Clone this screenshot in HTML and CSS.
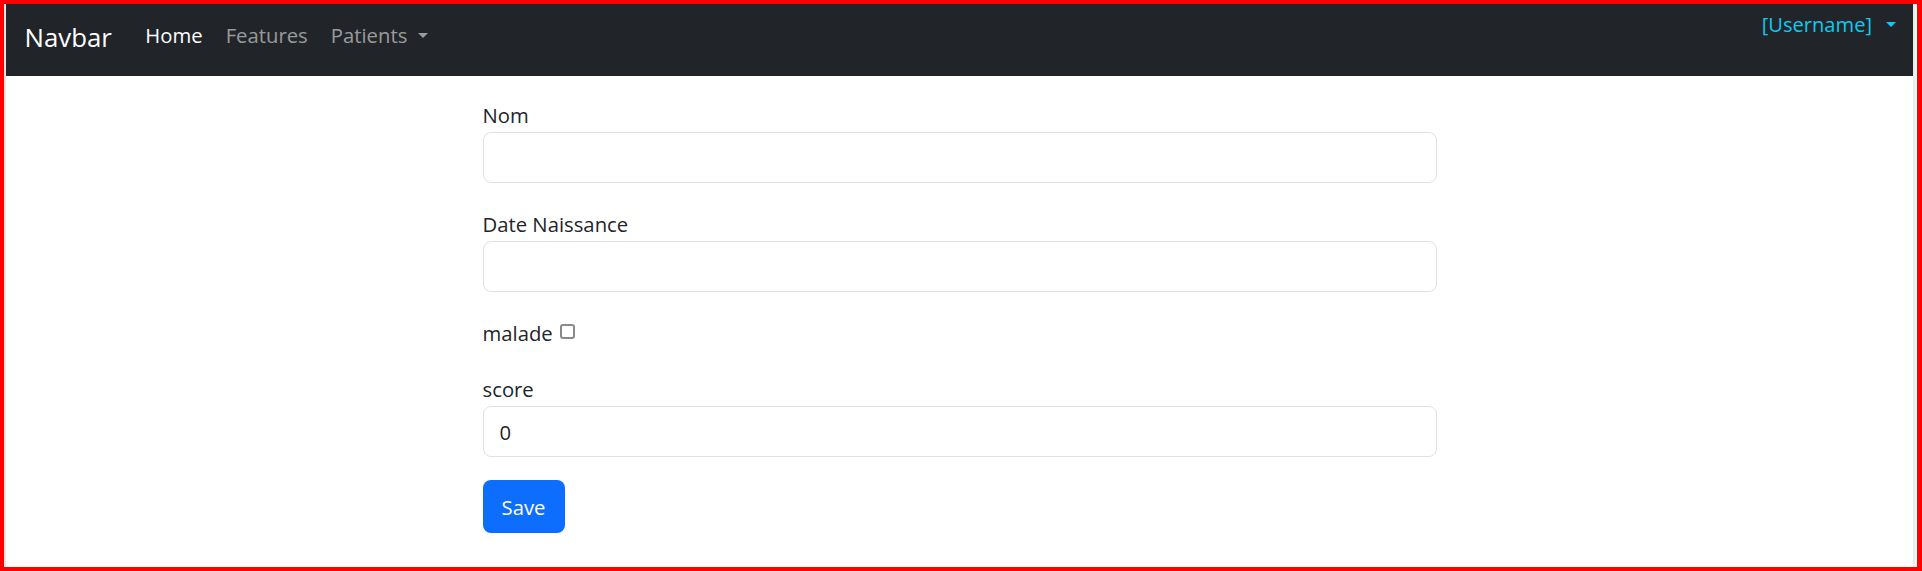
FILE: index.html
```html
<!DOCTYPE html>
<html lang="fr">
<head>
<meta charset="utf-8">
<title>Patient</title>
<link rel="stylesheet" href="styles.css">
</head>
<body>
<div class="frame">
  <div class="page">
    <nav class="navbar">
      <a class="brand" href="#">Navbar</a>
      <ul class="nav">
        <li class="nav-item"><a class="nav-link active" href="#">Home</a></li>
        <li class="nav-item"><a class="nav-link" href="#">Features</a></li>
        <li class="nav-item"><a class="nav-link" href="#">Patients<span class="caret"></span></a></li>
      </ul>
      <a class="user" href="#">[Username]<span class="caret user-caret"></span></a>
    </nav>
    <main class="content">
      <form class="form">
        <div class="field">
          <label class="label" for="nom">Nom</label>
          <input class="input" id="nom" type="text">
        </div>
        <div class="field">
          <label class="label" for="dn">Date Naissance</label>
          <input class="input" id="dn" type="text">
        </div>
        <div class="field check-row">
          <label class="label inline" for="malade">malade</label><input class="check" id="malade" type="checkbox">
        </div>
        <div class="field">
          <label class="label" for="score">score</label>
          <input class="input" id="score" type="text" value="0">
        </div>
        <button class="btn" type="button">Save</button>
      </form>
    </main>
  </div>
</div>
</body>
</html>
```

FILE: styles.css
```css
* { box-sizing: border-box; }

html, body {
  margin: 0;
  padding: 0;
  background: #fff;
}

body {
  font-family: "Open Sans", "Noto Sans", "Liberation Sans", sans-serif;
  color: #212529;
}

.frame {
  width: 1922px;
  height: 571px;
  border-style: solid;
  border-color: #ff0000;
  border-width: 4px 5px 4px 4px;
  display: flex;
  overflow: hidden;
}

.page {
  flex: 1;
  margin-right: 2px;
  border-left: 2px solid #e6e6e6;
  border-right: 2px solid #ebebeb;
  background: #fff;
}

.navbar {
  height: 72px;
  background: #212529;
  display: flex;
  align-items: flex-start;
  padding: 0 17px 0 18.5px;
}

.brand {
  font-size: 25.8px;
  line-height: 36px;
  margin-top: 15px;
  color: #fff;
  text-decoration: none;
  margin-right: 22px;
}

.nav {
  list-style: none;
  margin: 15px 0 0 0;
  padding: 0;
  display: flex;
}

.nav-link {
  display: block;
  padding: 0 11.5px;
  font-size: 20.3px;
  line-height: 32px;
  color: rgba(255, 255, 255, 0.55);
  text-decoration: none;
}

.nav-link.active {
  color: #fff;
}

.caret {
  display: inline-block;
  margin-left: 11px;
  vertical-align: 0.26em;
  border-top: 0.28em solid;
  border-left: 0.28em solid transparent;
  border-right: 0.28em solid transparent;
}

.user {
  margin-left: auto;
  margin-top: 5px;
  font-size: 20.1px;
  line-height: 32px;
  color: #0dcaf0;
  text-decoration: none;
}

.user-caret {
  margin-left: 14px;
  border-top-width: 0.29em;
  border-left-width: 0.29em;
  border-right-width: 0.29em;
}

.content {
  padding-top: 23px;
}

.form {
  width: 954px;
  margin: 0 auto;
}

.field {
  margin-bottom: 25px;
}

.label {
  display: block;
  font-size: 20.3px;
  line-height: 32px;
  margin-bottom: 1px;
}

.label.inline {
  display: inline;
}

.check-row {
  font-size: 20.3px;
  line-height: 32px;
  height: 32px;
  margin-bottom: 24px;
}

.check {
  appearance: none;
  -webkit-appearance: none;
  display: inline-block;
  width: 15px;
  height: 15px;
  margin: 7px 0 0 7px;
  vertical-align: top;
  border: 2px solid #8a8a8a;
  border-radius: 3px;
  background: #fff;
}

.input {
  display: block;
  width: 100%;
  height: 51px;
  padding: 0 16px;
  font-family: inherit;
  font-size: 20.3px;
  line-height: 32px;
  color: #212529;
  background: #fff;
  border: 1px solid #dee2e6;
  border-radius: 8px;
  outline: none;
}

.btn {
  display: block;
  width: 82px;
  height: 53px;
  padding: 0;
  font-family: inherit;
  font-size: 20.3px;
  line-height: 32px;
  color: #fff;
  background: #0d6efd;
  border: none;
  border-radius: 8px;
  margin-top: -2px;
}
```
